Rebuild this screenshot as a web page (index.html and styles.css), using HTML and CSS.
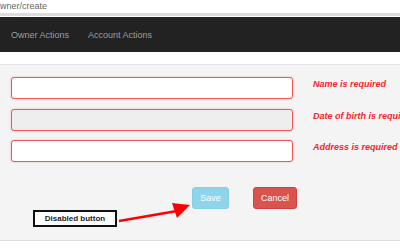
FILE: index.html
```html
<!DOCTYPE html>
<html lang="en">
<head>
  <meta charset="UTF-8" />
  <title>Owner create</title>
  <link rel="stylesheet" href="styles.css">
</head>
<body>

  <!-- address bar strip -->
  <div class="urlbar">wner/create</div>

  <!-- top nav -->
  <nav class="navbar">
    <a href="#" class="nav-link">Owner Actions</a>
    <a href="#" class="nav-link">Account Actions</a>
  </nav>

  <div class="spacer"></div>

  <!-- form -->
  <div class="panel">
    <div class="form-row">
      <input type="text" class="field" />
      <span class="error">Name is required</span>
    </div>
    <div class="form-row">
      <input type="text" class="field field-disabled" disabled />
      <span class="error">Date of birth is required</span>
    </div>
    <div class="form-row">
      <input type="text" class="field" />
      <span class="error">Address is required</span>
    </div>

    <div class="actions">
      <button class="btn btn-save" disabled>Save</button>
      <button class="btn btn-cancel">Cancel</button>
    </div>

    <!-- annotation -->
    <div class="note">Disabled button</div>
    <svg class="arrow" width="80" height="30" viewBox="115 200 80 30">
      <line x1="119" y1="221" x2="177" y2="211" stroke="#f00" stroke-width="2.5" />
      <polygon points="190,205 172,203 177,218" fill="#f00" />
    </svg>
  </div>

  <div class="footer"></div>

</body>
</html>
```

FILE: styles.css
```css
html, body {
  margin: 0;
  padding: 0;
  font-family: 'Liberation Sans', Arial, sans-serif;
  background: #fff;
  overflow: hidden;
}

.urlbar {
  height: 13px;
  line-height: 13px;
  font-size: 9px;
  color: #666;
  border-bottom: 3px solid #dcdcdc;
  margin-bottom: 1px;
  white-space: nowrap;
}

.navbar {
  display: flex;
  align-items: center;
  gap: 19px;
  height: 35px;
  padding-left: 11px;
  background-color: #222;
}

.nav-link {
  font-size: 9px;
  color: #9d9d9d;
  text-decoration: none;
}

.spacer {
  height: 12px;
}

.panel {
  position: relative;
  background-color: #f4f4f4;
  border-top: 1px solid #e6e6e6;
  border-bottom: 1px solid #dedede;
  padding: 12px 0 22px 11px;
  height: 141px;
}

.form-row {
  display: flex;
  align-items: flex-start;
  gap: 20px;
  margin-bottom: 9.5px;
}

.field {
  flex-shrink: 0;
  box-sizing: border-box;
  width: 282px;
  height: 22px;
  margin: 0;
  border: 1px solid #ee5858;
  border-radius: 3px;
  background: #fff;
  box-shadow: 0 0 2px rgba(255, 80, 80, 0.45);
  outline: none;
}

.field-disabled {
  background: #eee;
}

.error {
  flex-shrink: 0;
  margin-top: 2px;
  line-height: 10px;
  font-size: 9px;
  font-weight: bold;
  font-style: italic;
  color: #f0282c;
  white-space: nowrap;
}

.actions {
  display: flex;
  gap: 24px;
  margin-top: 25px;
  padding-left: 181px;
}

.btn {
  height: 22px;
  padding: 0;
  font-family: 'Liberation Sans', Arial, sans-serif;
  font-size: 9px;
  color: #fff;
  border-radius: 3px;
  border: 1px solid transparent;
}

.btn-save {
  width: 37px;
  background-color: #8fd4ea;
  border-color: #86cfe6;
}

.btn-cancel {
  width: 44px;
  background-color: #d9534f;
  border-color: #d43f3a;
}

.note {
  position: absolute;
  left: 33px;
  top: 145px;
  box-sizing: border-box;
  width: 84px;
  height: 17px;
  line-height: 13px;
  border: 2px solid #111;
  background: #fff;
  font-size: 8px;
  font-weight: bold;
  color: #1c1c2c;
  text-align: center;
}

.arrow {
  position: absolute;
  left: 115px;
  top: 135px;
}

.footer {
  height: 10px;
}
```
